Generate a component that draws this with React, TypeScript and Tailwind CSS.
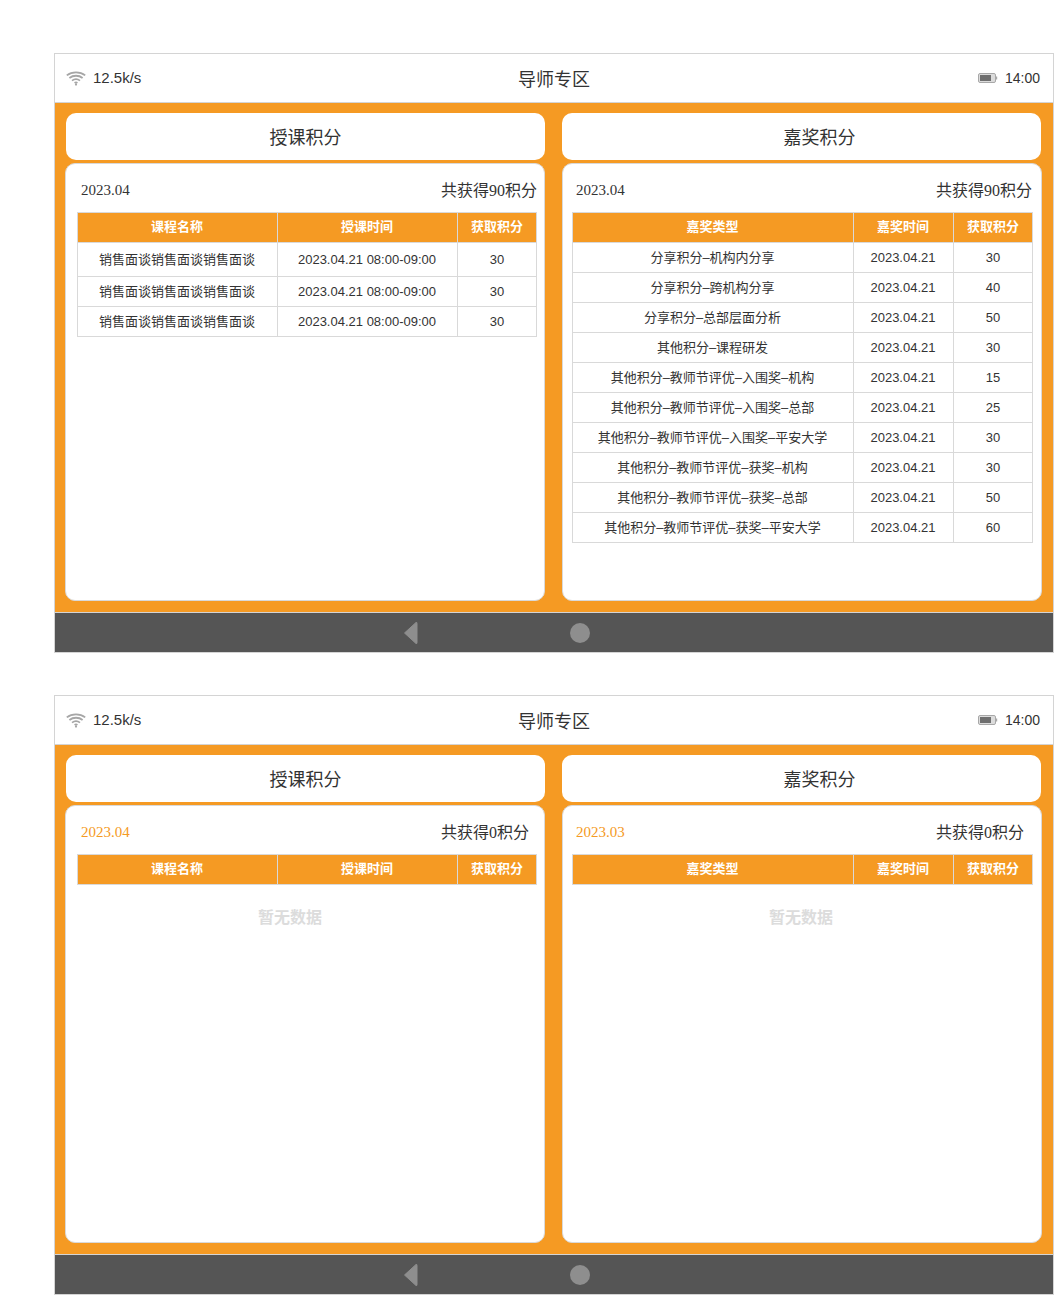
import React from 'react';

const serif = { fontFamily: '"Liberation Serif", "Noto Sans CJK SC", serif' };

type Row = string[];

const lessonCols = ['w-[200px]', 'w-[180px]', 'w-[79px]'];
const awardCols = ['w-[281px]', 'w-[100px]', 'w-[79px]'];

const lessonHead = ['课程名称', '授课时间', '获取积分'];
const awardHead = ['嘉奖类型', '嘉奖时间', '获取积分'];

const lessonRows: Row[] = [
  ['销售面谈销售面谈销售面谈', '2023.04.21 08:00-09:00', '30'],
  ['销售面谈销售面谈销售面谈', '2023.04.21 08:00-09:00', '30'],
  ['销售面谈销售面谈销售面谈', '2023.04.21 08:00-09:00', '30'],
];

const awardRows: Row[] = [
  ['分享积分–机构内分享', '2023.04.21', '30'],
  ['分享积分–跨机构分享', '2023.04.21', '40'],
  ['分享积分–总部层面分析', '2023.04.21', '50'],
  ['其他积分–课程研发', '2023.04.21', '30'],
  ['其他积分–教师节评优–入围奖–机构', '2023.04.21', '15'],
  ['其他积分–教师节评优–入围奖–总部', '2023.04.21', '25'],
  ['其他积分–教师节评优–入围奖–平安大学', '2023.04.21', '30'],
  ['其他积分–教师节评优–获奖–机构', '2023.04.21', '30'],
  ['其他积分–教师节评优–获奖–总部', '2023.04.21', '50'],
  ['其他积分–教师节评优–获奖–平安大学', '2023.04.21', '60'],
];

const WifiIcon = () => (
  <svg width="20" height="15" viewBox="0 0 20 15" fill="none" stroke="#a6a6a6" strokeWidth="1.8">
    <path d="M.8 4.4C6 .3 14 .3 19.2 4.4" />
    <path d="M3.4 7C7.2 4 12.8 4 16.6 7" />
    <path d="M6 9.6C8.3 7.9 11.7 7.9 14 9.6" />
    <path d="M8.6 12C9.4 11.4 10.6 11.4 11.4 12" />
    <circle cx="10" cy="13.6" r="1.1" fill="#a6a6a6" stroke="none" />
  </svg>
);

const BatteryIcon = () => (
  <svg width="20" height="10" viewBox="0 0 20 10">
    <rect x="0.5" y="0.5" width="17" height="9" rx="1.5" fill="#dcdcdc" stroke="#a8a8a8" />
    <rect x="2" y="2" width="11" height="6" fill="#6f6f6f" />
    <rect x="18" y="3.5" width="1.2" height="3" fill="#a8a8a8" />
  </svg>
);

const StatusBar = () => (
  <div className="flex h-[49px] items-center justify-between border-b border-[#d4d4d4] bg-white pl-[11px] pr-[13px]">
    <div className="flex w-[120px] items-center gap-[7px] text-[15px] text-[#333]">
      <WifiIcon />
      <span>12.5k/s</span>
    </div>
    <div className="ml-[2px] pt-[5px] text-[18px] text-[#333]" style={serif}>导师专区</div>
    <div className="flex w-[120px] items-center justify-end gap-[7px] text-[14px] text-[#333]">
      <BatteryIcon />
      <span>14:00</span>
    </div>
  </div>
);

const NavBar = () => (
  <div className="flex h-[40px] items-center border-t border-[#d4d4d4] bg-[#555555] pl-[348px]">
    <svg width="15" height="24" viewBox="0 0 15 24">
      <path d="M13 1.5 L1.5 12 L13 22.5 Q14 23 14 21.5 V2.5 Q14 1 13 1.5Z" fill="#8e8e8e" stroke="#8e8e8e" strokeLinejoin="round" />
    </svg>
    <div className="ml-[152px] h-[20px] w-[20px] rounded-full bg-[#8e8e8e]" />
  </div>
);

const ScoreTable = ({ cols, head, rows, firstTall }: { cols: string[]; head: string[]; rows: Row[]; firstTall?: boolean }) => (
  <table className="table-fixed border-collapse text-center">
    <thead>
      <tr className="h-[30px] bg-[#f59a23] text-[13px] text-white">
        {head.map((h, i) => (
          <th key={h} className={`${cols[i]} border border-[#d9d9d9] p-0 pb-[1px] font-bold ${i < 2 ? 'pr-[1px]' : ''}`}>{h}</th>
        ))}
      </tr>
    </thead>
    <tbody>
      {rows.map((r, ri) => (
        <tr key={ri} className={firstTall && ri === 0 ? 'h-[34px]' : 'h-[30px]'}>
          {r.map((c, i) => (
            <td key={i} className={`border border-[#d9d9d9] p-0 text-[13px] text-[#333] ${i < 2 ? 'pr-[1px]' : ''}`}>{c}</td>
          ))}
        </tr>
      ))}
    </tbody>
  </table>
);

const Side = ({ title, date, total, dateOrange, cols, head, rows, firstTall, emptyPad, titlePad, bodyPad, totalPad }: {
  title: string; date: string; total: string; dateOrange?: boolean; cols: string[]; head: string[]; rows: Row[];
  firstTall?: boolean; emptyPad?: string; titlePad: string; bodyPad: string; totalPad: string;
}) => (
  <div className="flex w-[480px] flex-col">
    <div className={`flex h-[47px] items-center justify-center rounded-[10px] bg-white pt-[3px] text-[18px] text-[#333] ${titlePad}`} style={serif}>
      {title}
    </div>
    <div className={`mt-[3px] h-[438px] rounded-[10px] border border-[#d9d9d9] bg-white ${bodyPad}`}>
      <div className={`flex h-[48px] items-center justify-between pl-[4px] pt-[5px] ${totalPad}`} style={serif}>
        <span className={`text-[15px] ${dateOrange ? 'text-[#f59a23]' : 'text-[#333]'}`}>{date}</span>
        <span className="w-[95px] whitespace-nowrap text-[16px] text-[#333]">{total}</span>
      </div>
      <ScoreTable cols={cols} head={head} rows={rows} firstTall={firstTall} />
      {emptyPad && (
        <div className={`mt-[21px] text-[16px] font-bold text-[#dcdcdc] ${emptyPad}`} style={serif}>暂无数据</div>
      )}
    </div>
  </div>
);

const Screen = ({ children }: { children: React.ReactNode }) => (
  <div className="w-[1000px] border border-[#d4d4d4]">
    <StatusBar />
    <div className="flex h-[509px] items-start gap-[17px] bg-[#f59a23] pl-[10px] pt-[10px]">{children}</div>
    <NavBar />
  </div>
);

export default function App() {
  return (
    <div className="flex min-h-[1295px] flex-col gap-[42px] bg-white pl-[54px] pt-[53px]" style={{ fontFamily: '"Liberation Sans", "Noto Sans CJK SC", sans-serif' }}>
      <Screen>
        <Side titlePad="ml-[1px]" bodyPad="pl-[11px]" totalPad="pr-[8px]" title="授课积分" date="2023.04" total="共获得90积分" cols={lessonCols} head={lessonHead} rows={lessonRows} firstTall />
        <Side titlePad="pl-[36px] w-[479px]" bodyPad="pl-[9px]" totalPad="pr-[10px]" title="嘉奖积分" date="2023.04" total="共获得90积分" cols={awardCols} head={awardHead} rows={awardRows} />
      </Screen>
      <Screen>
        <Side titlePad="ml-[1px]" bodyPad="pl-[11px]" totalPad="pr-[8px]" title="授课积分" date="2023.04" dateOrange total="共获得0积分" cols={lessonCols} head={lessonHead} rows={[]} emptyPad="pl-[181px]" />
        <Side titlePad="pl-[36px] w-[479px]" bodyPad="pl-[9px]" totalPad="pr-[10px]" title="嘉奖积分" date="2023.03" dateOrange total="共获得0积分" cols={awardCols} head={awardHead} rows={[]} emptyPad="pl-[197px]" />
      </Screen>
    </div>
  );
}
